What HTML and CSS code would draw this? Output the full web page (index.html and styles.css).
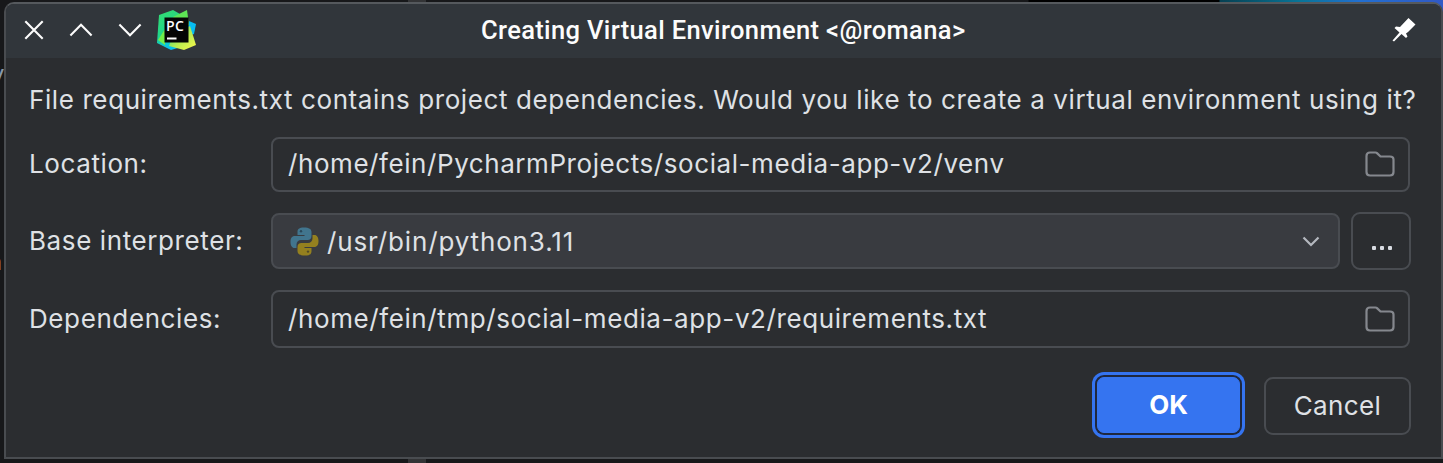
FILE: index.html
```html
<!DOCTYPE html>
<html lang="en">
<head>
<meta charset="utf-8">
<title>Creating Virtual Environment</title>
<link rel="stylesheet" href="styles.css">
</head>
<body>
<div class="backdrop">
  <span class="peek peek-y">y</span>
  <span class="peek peek-n">n</span>
  <span class="strip strip-top"></span>
  <span class="strip strip-bottom"></span>
</div>
<main class="dialog">
  <header class="titlebar">
    <div class="controls">
      <svg width="20" height="20" viewBox="0 0 20 20"><path d="M1.3 1.3 18.7 18.7M18.7 1.3 1.3 18.7"/></svg>
      <svg width="24" height="14" viewBox="0 0 24 14"><path d="M1.4 12.4 12 1.8 22.6 12.4"/></svg>
      <svg width="24" height="14" viewBox="0 0 24 14"><path d="M1.4 1.6 12 12.2 22.6 1.6"/></svg>
    </div>
    <svg class="logo" width="42" height="42" viewBox="0 0 42 42">
      <defs>
        <linearGradient id="g1" x1="0" y1="0" x2="0.3" y2="1"><stop offset="0" stop-color="#35dc70"/><stop offset=".6" stop-color="#21d789"/><stop offset="1" stop-color="#07c3ed"/></linearGradient>
        <linearGradient id="g2" x1="0" y1="0" x2="1" y2="1"><stop offset="0" stop-color="#21d789"/><stop offset=".55" stop-color="#b8ed50"/><stop offset="1" stop-color="#fcf84a"/></linearGradient>
      </defs>
      <path fill="#07bdf2" d="M33 12 40 15 38 25 30 28Z"/>
      <path fill="url(#g1)" d="M3 6 17 1 24 5 25 38 15 41 1 34Z"/>
      <path fill="#5ee655" d="M17 8 31 1 33 16 18 18Z"/>
      <path fill="url(#g2)" d="M34 17 40 36 28 41 13 37 17 26Z"/>
      <path fill="#72ef49" d="M2 31 9 20 9 36Z"/>
      <path fill="#050505" d="M8.500 8.500h24v25h-24z"/>
      <path fill="#fff" d="M11 28.500h9.500v2H11z"/>
      <text x="10" y="21.500" class="logo-text">PC</text>
    </svg>
    <h1>Creating Virtual Environment &lt;@romana&gt;</h1>
    <svg class="pin" width="24" height="24" viewBox="0 0 24 24"><path d="M16.500 0 23.500 6.500 16 14 14 15.500 15.500 18.500 14 20 9.500 16 2 23.500 .5 22.500 7.500 14.500 2.500 10 4 8.500 8 9Z"/></svg>
  </header>
  <section class="content">
    <p class="message">File requirements.txt contains project dependencies. Would you like to create a virtual environment using it?</p>
    <div class="row row-location">
      <label>Location:</label>
      <div class="field"><span class="path-location">/home/fein/PycharmProjects/social-media-app-v2/venv</span>
        <svg class="folder" width="30" height="26" viewBox="0 0 30 26"><path d="M5 1.500H10.500Q11.400 1.500 12 2.100L15.500 5.500H25Q28.500 5.500 28.500 8.500V21Q28.500 24.500 25 24.500H5Q1.500 24.500 1.500 21V5Q1.500 1.500 5 1.500Z"/></svg>
      </div>
    </div>
    <div class="row row-interpreter">
      <label>Base interpreter:</label>
      <div class="field combo">
        <svg class="python" width="29" height="29" viewBox="0 0 29 29">
          <path fill="#41758e" d="M14 .5C9 .5 7.500 2 7.500 5v3h7v1H5C1.500 9 .5 11.500 .5 15c0 3.500 1.500 6 4 6h2v-3.500C6.500 15 8.500 13 11 13h6.500C20 13 21.500 11.500 21.500 9V5c0-3-2.500-4.500-7.500-4.500Z"/>
          <path fill="#94801f" d="M15 28.500c5 0 6.500-1.500 6.500-4.500v-3h-7v-1H24c3.500 0 4.500-2.500 4.500-6 0-3.500-1.500-6-4-6h-2v3.500c0 2.500-2 4.500-4.500 4.500h-6.500C9 16 7.500 17.500 7.500 20v4c0 3 2.500 4.500 7.500 4.500Z"/>
          <circle cx="11" cy="4.300" r="1.200" fill="#29485a"/><circle cx="18" cy="24.600" r="1.200" fill="#514a27"/>
        </svg>
        <span class="path-python">/usr/bin/python3.11</span>
        <svg class="chevron" width="18" height="11" viewBox="0 0 18 11"><path d="M1.500 1.500 9 9 16.500 1.500"/></svg>
      </div>
      <button class="more" aria-label="Browse"><i></i><i></i><i></i></button>
    </div>
    <div class="row row-dependencies">
      <label>Dependencies:</label>
      <div class="field"><span>/home/fein/tmp/social-media-app-v2/requirements.txt</span>
        <svg class="folder" width="30" height="26" viewBox="0 0 30 26"><path d="M5 1.500H10.500Q11.400 1.500 12 2.100L15.500 5.500H25Q28.500 5.500 28.500 8.500V21Q28.500 24.500 25 24.500H5Q1.500 24.500 1.500 21V5Q1.500 1.500 5 1.500Z"/></svg>
      </div>
    </div>
    <footer class="actions">
      <button class="ok">OK</button>
      <button class="cancel">Cancel</button>
    </footer>
  </section>
</main>
</body>
</html>
```
FILE: styles.css
```css
* { box-sizing: border-box; }
body {
  margin: 0;
  width: 1443px;
  height: 463px;
  overflow: hidden;
  background: #17181a;
  color: #dfe1e5;
  font: 26px/32px Inter, sans-serif;
  letter-spacing: 0.600px;
  padding: 2px 0 0 4px;
}
svg { display: block; flex: none; }
.backdrop {
  position: absolute;
  inset: 0;
  z-index: -1;
  overflow: hidden;
  background:
    linear-gradient(90deg, #17181a 1028px, #000 1029px 1219px, #064052 1220px, #087598 1300px, #226fd0 1360px, #3159c5 1443px) 0 0 / 1443px 20px no-repeat,
    #17181a;
}
.peek { position: absolute; font-size: 24px; }
.peek-y { left: -9px; top: 58px; color: #8998aa; }
.peek-n { left: -12px; top: 246px; color: #b08350; }
.strip { position: absolute; left: 408px; width: 18px; height: 5px; background: #333436; }
.strip-top { top: 0; }
.strip-bottom { bottom: 0; }
.dialog {
  width: 1439px;
  height: 457px;
  border: 2px solid #494c50;
  border-top-color: #55595d;
  border-radius: 10px 10px 0 0;
  background: #2b2d30;
  overflow: hidden;
}
.titlebar {
  height: 54px;
  background: #31363b;
  display: grid;
  grid-template-columns: 151px 42px 1fr 24px;
  padding: 0 25px 2px 0;
  align-items: center;
}
.controls { display: flex; align-items: center; gap: 25px; padding-left: 18px; }
.controls svg { fill: none; stroke: #fcfcfc; stroke-width: 2.100; }
.logo { margin-left: -1px; }
.logo-text { font: 600 14px "Open Sans", sans-serif; letter-spacing: 0.500px; fill: #fff; }
.titlebar h1 {
  margin: 0;
  padding-left: 282px;
  font: 500 25.500px/32px Roboto, sans-serif;
  letter-spacing: 0.360px;
  color: #fcfcfc;
  white-space: nowrap;
}
.pin { fill: #fff; }
.content { padding: 26px 0 0 23px; }
.message { margin: 0; height: 53px; white-space: nowrap; }
.row { display: grid; grid-template-columns: 242px 1139px; align-items: center; white-space: nowrap; }
.row-location { height: 55px; }
.row-location label, .path-location { margin-top: -2px; }
.row-interpreter { height: 58px; margin-top: 20px; grid-template-columns: 242px 1069px 60px; }
.row-interpreter .more { margin-left: 11px; }
.row-dependencies { height: 58px; margin-top: 20px; }
.field {
  height: 100%;
  display: flex;
  align-items: center;
  justify-content: space-between;
  padding: 0 13px 0 15px;
  border: 2px solid #494c51;
  border-radius: 8px;
}
.path-location { letter-spacing: 0.570px; }
.path-python { letter-spacing: 0.860px; padding-top: 2px; }
.combo { height: 56px; background: #393b40; justify-content: flex-start; padding: 0 18px 0 17px; }
.python { margin-right: 8px; }
.chevron { margin-left: auto; fill: none; stroke: #b4b8bf; stroke-width: 2.200; }
.folder { fill: none; stroke: #85888e; stroke-width: 2.200; }
.row-location .folder { margin-top: -2px; }
button {
  padding: 0;
  height: 58px;
  border: 2px solid #494c51;
  border-radius: 9px;
  background: transparent;
  color: #dfe1e5;
  font: inherit;
}
.more { width: 60px; display: flex; justify-content: center; gap: 4px; padding: 14px 0 0 1px; align-items: center; }
.more i { width: 4px; height: 4px; background: #d9dce2; border-radius: 1px; }
.actions { display: flex; padding: 29px 0 0 1068px; gap: 24px; }
.ok {
  width: 143px;
  height: 56px;
  border: 1px solid #3574f0;
  border-radius: 7px;
  background: #3574f0;
  color: #fff;
  font-weight: 700;
  box-shadow: 0 0 0 2px #1e2840, 0 0 0 5px #3574f0;
}
.cancel { width: 147px; height: 58px; letter-spacing: 0.400px; padding-bottom: 1px; }
```
